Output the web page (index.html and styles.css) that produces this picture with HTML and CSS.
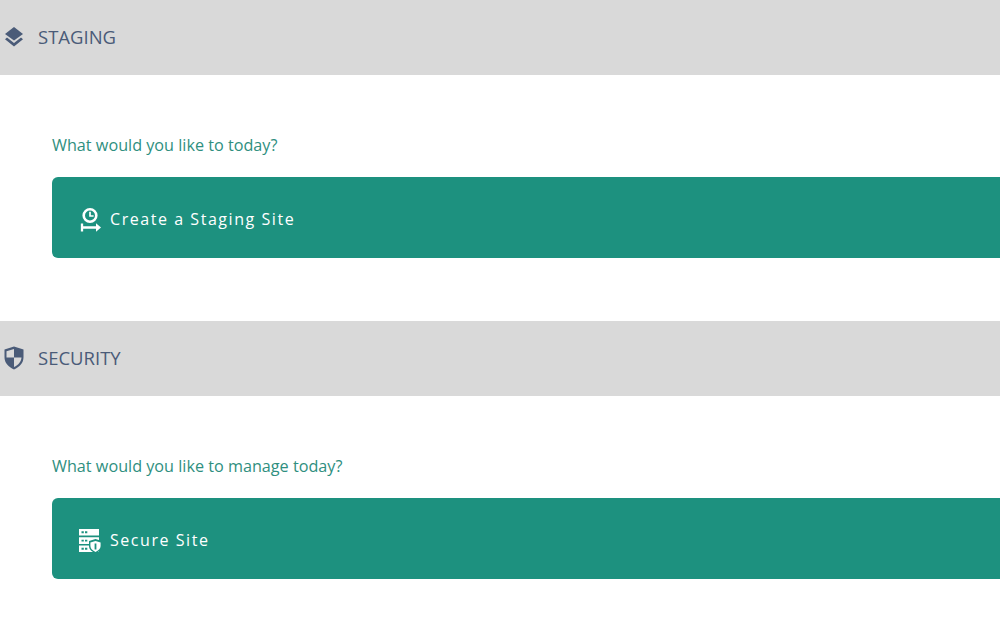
FILE: index.html
```html
<!DOCTYPE html>
<html lang="en">
<head>
    <meta charset="UTF-8">
    <title>Site Tools</title>
    <link rel="stylesheet" href="styles.css">
</head>
<body>
    <section class="section">
        <h2 class="section-head">
            <svg class="head-icon" viewBox="0 0 20 24">
                <path d="M10 2 L19 9 L10 15.5 L1 9 Z" fill="#4a5b78"/>
                <path d="M3 12.6 L1 14.3 L10 21.5 L19 14.3 L17 12.6 L10 18 Z" fill="#4a5b78"/>
            </svg>
            STAGING
        </h2>
        <div class="section-body">
            <p class="prompt">What would you like to today?</p>
            <a class="action" href="#">
                <svg class="action-icon" viewBox="0 0 22 24">
                    <circle cx="11" cy="7.5" r="6.3" fill="none" stroke="#fff" stroke-width="2.6"/>
                    <path d="M11 3.8 V8 H14.6" fill="none" stroke="#fff" stroke-width="1.7"/>
                    <path d="M3 15.5 V23.5 M3 19.5 H19" fill="none" stroke="#fff" stroke-width="2.3"/>
                    <path d="M17 15.3 L22 19.5 L17 23.7 Z" fill="#fff"/>
                </svg>
                Create a Staging Site
            </a>
        </div>
    </section>

    <section class="section">
        <h2 class="section-head">
            <svg class="head-icon" viewBox="0 0 20 24">
                <path d="M10 0.5 L19.5 3.5 V11 C19.5 17 15.5 21 10 23.5 C4.5 21 0.5 17 0.5 11 V3.5 Z" fill="#4a5b78"/>
                <path d="M10 3 V11.5 H2.5 V5.2 Z M10 11.5 H17.5 C17.2 15.8 14.5 19 10 21 Z" fill="#d9d9d9"/>
            </svg>
            SECURITY
        </h2>
        <div class="section-body">
            <p class="prompt">What would you like to manage today?</p>
            <a class="action" href="#">
                <svg class="action-icon" viewBox="0 0 22 24">
                    <path d="M0 0 H20 V6.5 H0 Z M0 8.2 H20 V15 H0 Z M0 16.6 H20 V23 H0 Z" fill="#fff"/>
                    <path d="M2.5 2.3 H4.8 V4.2 H2.5 Z M6 2.3 H8.3 V4.2 H6 Z M2.5 10.7 H4.8 V12.6 H2.5 Z M6 10.7 H8.3 V12.6 H6 Z M2.5 18.8 H4.8 V20.7 H2.5 Z M6 18.8 H8.3 V20.7 H6 Z" fill="#1d917f"/>
                    <path d="M16.5 10 L23 12 V17 C23 20.5 20 22.8 16.5 24.5 C13 22.8 10 20.5 10 17 V12 Z" fill="#1d917f"/>
                    <path d="M16.5 12 L21.6 13.4 V17 C21.6 19.8 19.3 21.6 16.5 23 C13.7 21.6 11.4 19.8 11.4 17 V13.4 Z" fill="#fff"/>
                    <path d="M15.6 14.5 H17.4 V20.5 H15.6 Z" fill="#1d917f"/>
                </svg>
                Secure Site
            </a>
        </div>
    </section>
</body>
</html>
```

FILE: styles.css
```css
body {
    margin: 0;
    font-family: 'Open Sans', sans-serif;
    background-color: #fff;
    overflow: hidden;
}
.section-head {
    display: flex;
    align-items: center;
    gap: 14px;
    height: 75px;
    margin: 0;
    padding: 0 0 2px 4px;
    box-sizing: border-box;
    background-color: #d9d9d9;
    color: #4a5b78;
    font-size: 18.5px;
    font-weight: 400;
}
.head-icon {
    width: 20px;
    height: 24px;
}
.section-body {
    padding: 59px 0 63px 52px;
}
.prompt {
    margin: 0 0 21px;
    color: #2f8f80;
    font-size: 16.2px;
    line-height: 22px;
}
.action {
    display: flex;
    align-items: center;
    gap: 9px;
    height: 81px;
    padding: 2px 0 0 27px;
    box-sizing: border-box;
    border-radius: 6px 0 0 6px;
    background-color: #1d917f;
    color: #fff;
    font-size: 16px;
    font-weight: 500;
    letter-spacing: 1.55px;
    text-decoration: none;
}
.action-icon {
    width: 22px;
    height: 24px;
    margin-top: 3px;
    overflow: visible;
}
```
